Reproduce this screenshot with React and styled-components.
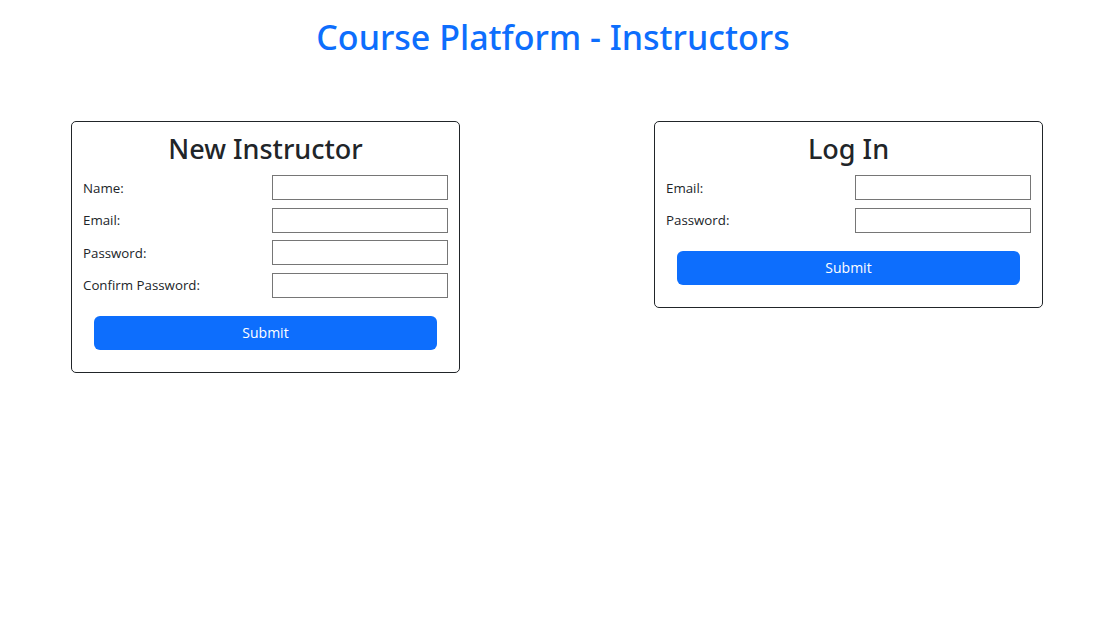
import React from "react";
import styled, { createGlobalStyle } from "styled-components";

const Global = createGlobalStyle`
  html, body { margin: 0; padding: 0; background: #fff; }
  body {
    font-family: "Open Sans", "Noto Sans", Arial, sans-serif;
    color: #212529;
    -webkit-font-smoothing: antialiased;
  }
  * { box-sizing: border-box; }
`;

const Page = styled.div`
  width: 1106px;
  min-height: 644px;
`;

const Title = styled.h1`
  margin: 0;
  padding-top: 14px;
  height: 121px;
  text-align: center;
  font-family: "Noto Sans", "Open Sans", sans-serif;
  font-size: 34px;
  line-height: 46px;
  font-weight: 500;
  color: #0d6efd;
`;

const CardsRow = styled.div`
  display: flex;
  align-items: flex-start;
  gap: 194px;
  padding-left: 71px;
`;

const Card = styled.form`
  width: 389px;
  border: 1px solid #212529;
  border-radius: 5px;
  padding: 10px 11px 22px;
`;

const CardTitle = styled.h3`
  margin: 0 0 10px;
  text-align: center;
  font-family: "Noto Sans", "Open Sans", sans-serif;
  font-size: 27px;
  line-height: 33px;
  font-weight: 500;
  color: #212529;
`;

const Fields = styled.div`
  display: flex;
  flex-direction: column;
  gap: 7.5px;
`;

const Row = styled.div`
  display: flex;
  align-items: center;
  justify-content: space-between;
  height: 25px;
`;

const Label = styled.label`
  font-size: 13.3px;
  color: #212529;
`;

const Input = styled.input`
  width: 176px;
  height: 25px;
  border: 1px solid #767676;
  border-radius: 0;
  padding: 1px 2px;
  font: inherit;
  background: #fff;
`;

const Submit = styled.button`
  display: block;
  width: calc(100% - 22px);
  margin: 18px 11px 0;
  height: 34px;
  border: none;
  border-radius: 6px;
  background: #0d6efd;
  color: #fff;
  font-family: inherit;
  font-size: 14px;
  cursor: pointer;
`;

function FormCard({ title, fields }) {
  return (
    <Card onSubmit={(e) => e.preventDefault()}>
      <CardTitle>{title}</CardTitle>
      <Fields>
        {fields.map((f) => (
          <Row key={f.label}>
            <Label>{f.label}</Label>
            <Input type={f.type} />
          </Row>
        ))}
      </Fields>
      <Submit type="submit">Submit</Submit>
    </Card>
  );
}

export default function App() {
  return (
    <Page>
      <Global />
      <Title>Course Platform - Instructors</Title>
      <CardsRow>
        <FormCard
          title="New Instructor"
          fields={[
            { label: "Name:", type: "text" },
            { label: "Email:", type: "email" },
            { label: "Password:", type: "password" },
            { label: "Confirm Password:", type: "password" },
          ]}
        />
        <FormCard
          title="Log In"
          fields={[
            { label: "Email:", type: "email" },
            { label: "Password:", type: "password" },
          ]}
        />
      </CardsRow>
    </Page>
  );
}
